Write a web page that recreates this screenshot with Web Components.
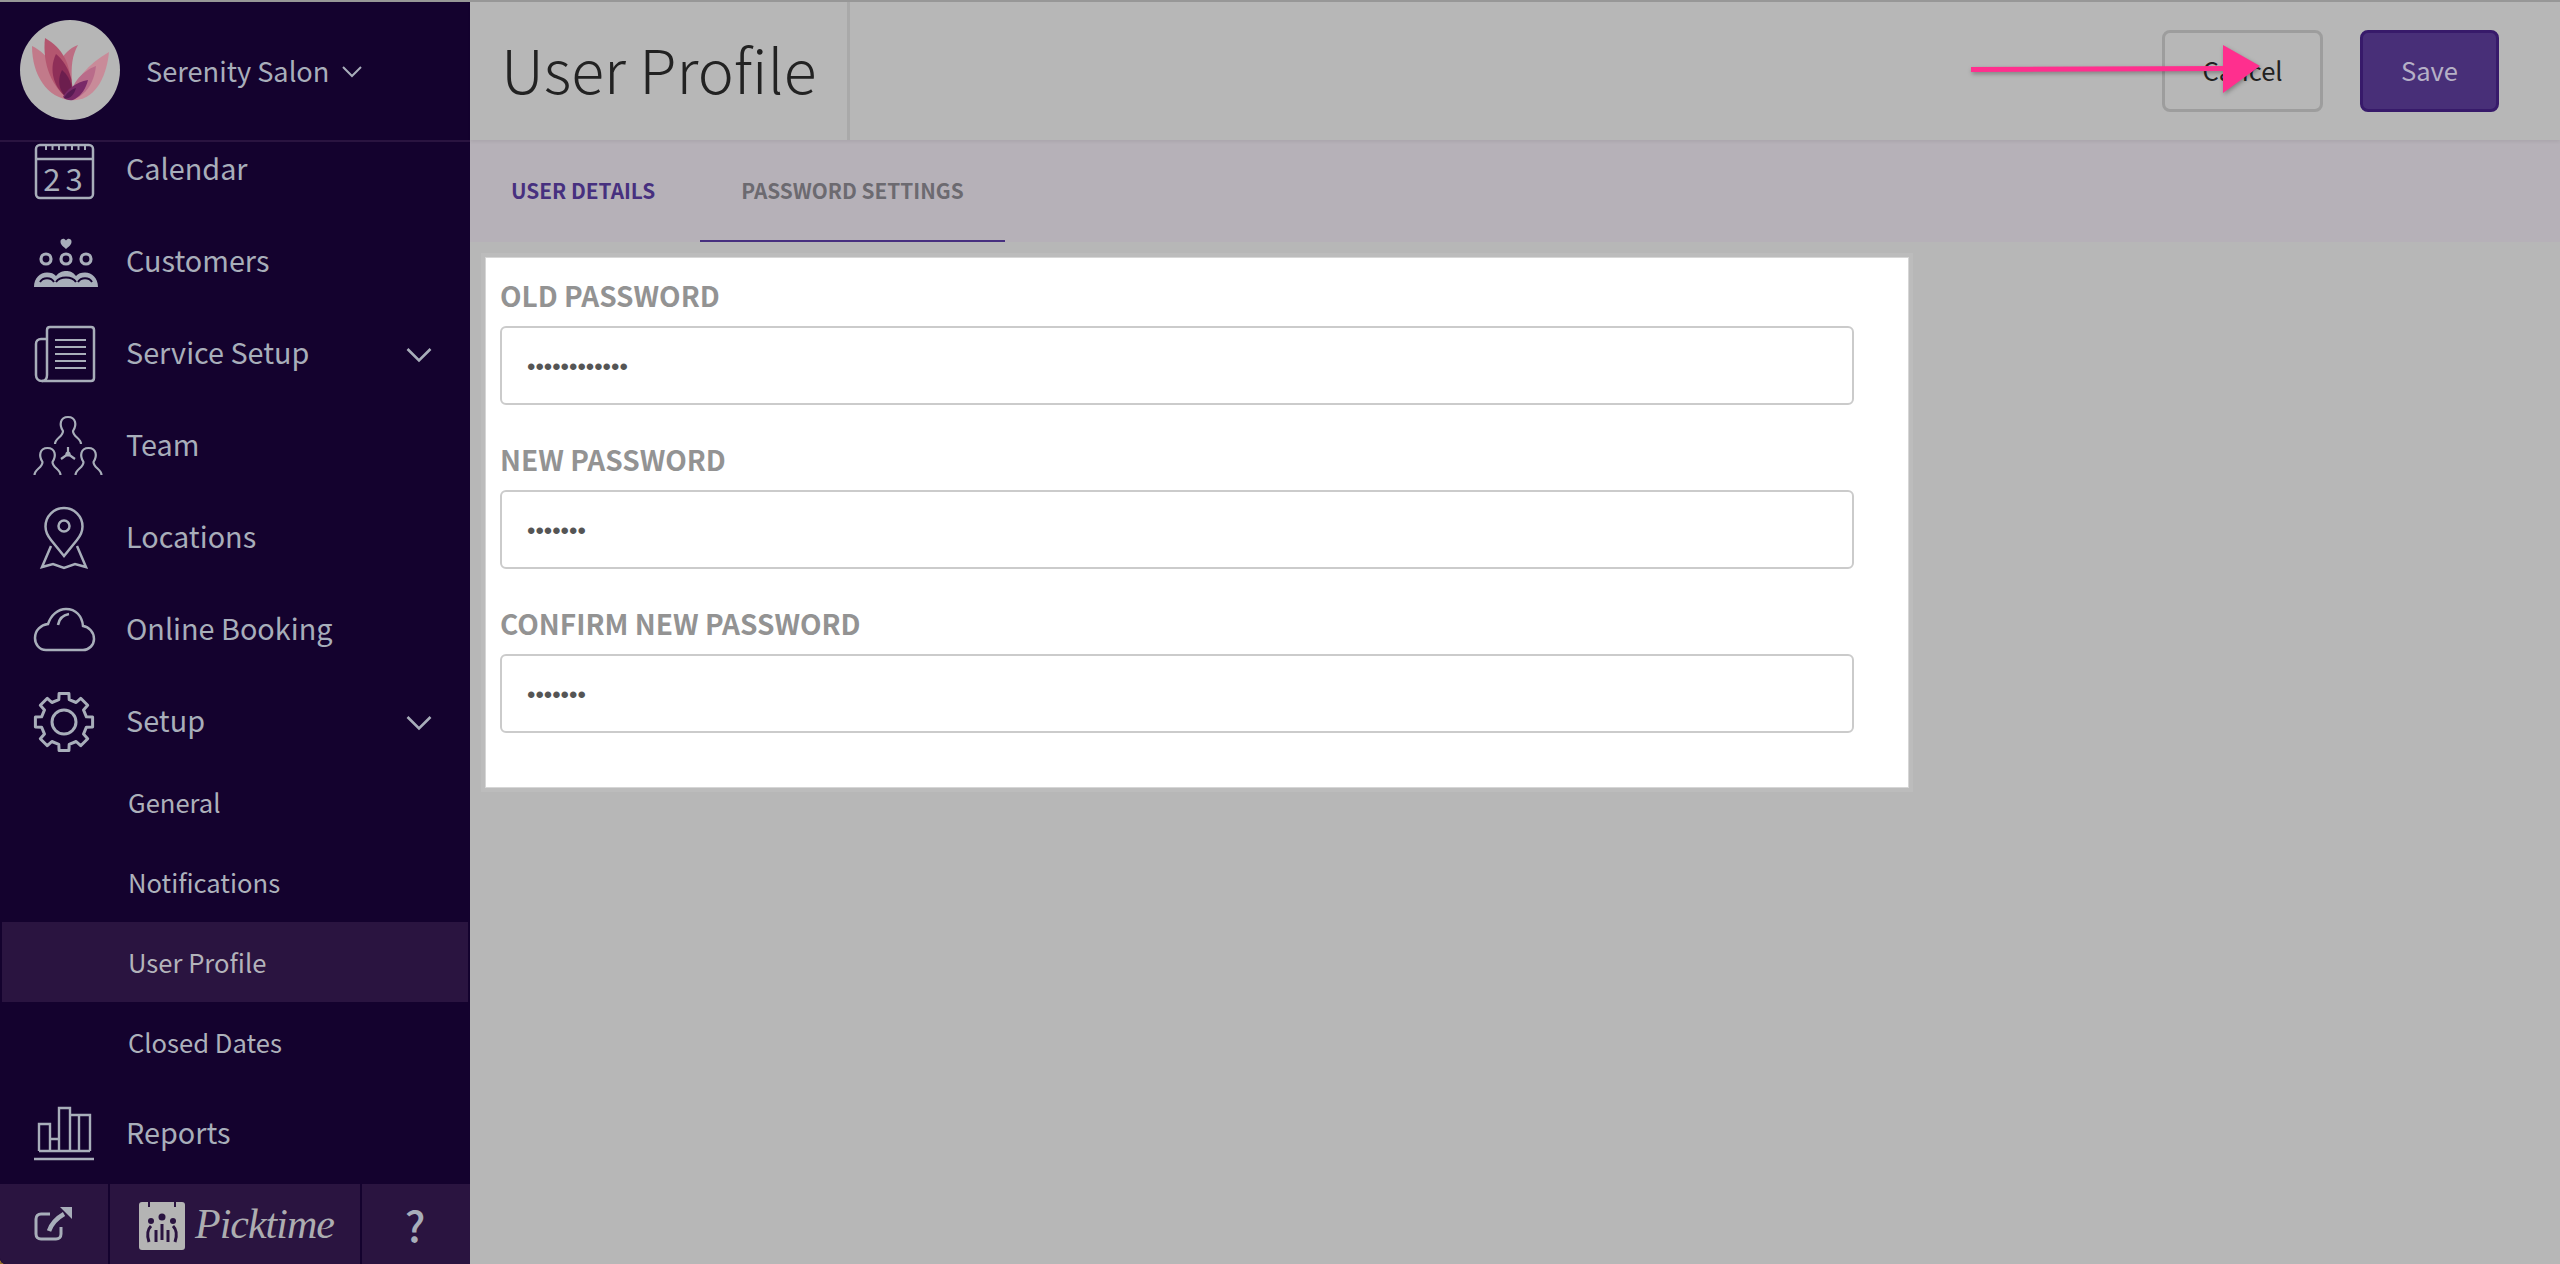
<!DOCTYPE html>
<html lang="en">
<head>
<meta charset="utf-8">
<title>User Profile</title>
<style>
  html, body { margin: 0; height: 100%; background: #b7b7b7; }
  body { font-family: "Noto Sans CJK SC", "Noto Sans", sans-serif; overflow: hidden; }
</style>
</head>
<body>
<app-shell>
  <side-bar slot="side" salon="Serenity Salon">
    <nav-item label="Calendar" icon="calendar" style="margin-top:-19px"></nav-item>
    <nav-item label="Customers" icon="customers"></nav-item>
    <nav-item label="Service Setup" icon="service" chevron></nav-item>
    <nav-item label="Team" icon="team"></nav-item>
    <nav-item label="Locations" icon="locations"></nav-item>
    <nav-item label="Online Booking" icon="cloud"></nav-item>
    <nav-item label="Setup" icon="gear" chevron></nav-item>
    <sub-item style="margin-top:-5px">General</sub-item>
    <sub-item>Notifications</sub-item>
    <sub-item active>User Profile</sub-item>
    <sub-item>Closed Dates</sub-item>
    <nav-item label="Reports" icon="reports" style="margin-top:5px"></nav-item>
  </side-bar>
  <page-header heading="User Profile"></page-header>
  <tab-bar>
    <tab-link accent>USER DETAILS</tab-link>
    <tab-link active>PASSWORD SETTINGS</tab-link>
  </tab-bar>
  <form-card>
    <password-field label="OLD PASSWORD" count="12"></password-field>
    <password-field label="NEW PASSWORD" count="7"></password-field>
    <password-field label="CONFIRM NEW PASSWORD" count="7"></password-field>
  </form-card>
</app-shell>

<script>
const INK = '#a8aeba';

function gearPath(cx, cy) {
  // eight rounded teeth, walked around the centre
  const pts = [];
  for (let i = 0; i < 8; i++) {
    const a = -Math.PI / 2 + i * Math.PI / 4;
    const s = 0.17, g = 0.23;
    pts.push([a - g, 23], [a - s, 29], [a + s, 29], [a + g, 23]);
  }
  return 'M' + pts.map(p => (cx + p[1] * Math.cos(p[0])).toFixed(1) + ' ' + (cy + p[1] * Math.sin(p[0])).toFixed(1)).join('L') + 'Z';
}

const PERSON = 'M-13 27C-13 21-5 20-5 14C-9 8-8 0 0 0C8 0 9 8 5 14C5 20 13 21 13 27';

const ICONS = {
  calendar: `<rect x="2" y="9" width="57" height="53" rx="4"/><path d="M2 23H59"/>
    <path d="M12 8v6M18.500 8v6M25 8v6M31.500 8v6M38 8v6M44.500 8v6M51 8v6" stroke-width="2"/>
    <text x="31.500" y="55" text-anchor="middle" font-size="31" letter-spacing="5" fill="${INK}" stroke="none" font-family="Noto Sans CJK SC, sans-serif">23</text>`,
  customers: `<path d="M32 21C27 17 26.500 15.500 26.500 13.500C26.500 11 30 9.500 32 12.500C34 9.500 37.500 11 37.500 13.500C37.500 15.500 37 17 32 21Z" fill="${INK}" stroke="none"/>
    <g stroke-width="3.200"><circle cx="12" cy="31" r="5"/><circle cx="32" cy="31" r="5"/><circle cx="52" cy="31" r="5"/></g>
    <path d="M0 59C0 50 6 44.500 13 44.500C17 44.500 20 45.500 22 48C25 44 29 43 32 43C36 43 39 44 42 48C44 45.500 47 44.500 51 44.500C58 44.500 64 50 64 59Z" fill="${INK}" stroke="none"/>
    <path d="M6 54C9 49 17 49 20 54M22 54C26 48 38 48 42 54M44 54C47 49 55 49 58 54" stroke="#14022e" stroke-width="2"/>`,
  service: `<path d="M13 55V10C13 8 14 7 16 7H57C59 7 60 8 60 10V58C60 60 59 61 57 61H8C4 61 2 58 2 55V24C2 21 4 19 7 19H13"/>
    <path d="M13 55C13 59 11 61 8 61" />
    <path d="M21 20H52M21 27H52M21 34H52M21 41H52M21 48H52" stroke-width="2"/>`,
  team: `<g stroke-width="2.200"><path d="${PERSON}" transform="translate(34 5)"/><path d="${PERSON}" transform="translate(13.500 36)"/><path d="${PERSON}" transform="translate(54.500 36)"/>
    <path d="M34 42V35M34 42L27 47M34 42L41 47"/><circle cx="34" cy="42" r="1.500" fill="${INK}"/></g>`,
  locations: `<path d="M30 52L17 36C13 31 11.500 27 11.500 22.500C11.500 12 20 4 30 4C40 4 48.500 12 48.500 22.500C48.500 27 47 31 43 36Z"/>
    <circle cx="30" cy="22" r="5.500"/>
    <path d="M17 42L8 63L19 60L30 64L41 60L52 63L43 42"/>`,
  cloud: `<path d="M12 54C5 54 1 48 1 42C1 34 7 29 14 28C17 19 24 13 32 13C42 13 48 20 49 30C55 31 60 36 60 43C60 49 55 54 49 54Z"/>
    <path d="M24 29C25 23 29 19 35 18"/>`,
  gear: `<g stroke-width="3"><path d="${gearPath(30, 34)}" stroke-linejoin="round"/><circle cx="30" cy="34" r="12"/></g>`,
  reports: `<path d="M5 51V24H16V51M16 51V39H25V51M25 51V8H36V51M36 51V15H56V51M45 15V51M5 51H56" stroke-width="2.400"/><path d="M0 59H60"/>`
};

class AppShell extends HTMLElement {
  constructor() {
    super();
    this.attachShadow({ mode: 'open' });
    this.shadowRoot.innerHTML = `
      <style>
        :host { display: grid; grid-template-columns: 470px 1fr; height: 1264px; position: relative; background: #96702c; }
        .side { grid-row: 1; min-height: 0; }
        .main { display: flex; flex-direction: column; background: #b7b7b7; min-width: 0; }
        svg.arrow { position: absolute; left: 1960px; top: 36px; filter: drop-shadow(1px 2px 2px rgba(0,0,0,.3)); }
        .edge { position: absolute; left: 0; right: 0; top: 0; height: 2px; background: #979797; }
      </style>
      <div class="side"><slot name="side"></slot></div>
      <div class="main"><slot></slot></div>
      <div class="edge"></div>
      <svg class="arrow" width="310" height="66" viewBox="0 0 310 66">
        <path d="M11 31L263 30V9L300 30L263 57V35L11 36Z" fill="#ff2f8e"/>
      </svg>`;
  }
}

class SideBar extends HTMLElement {
  constructor() {
    super();
    this.attachShadow({ mode: 'open' });
    this.shadowRoot.innerHTML = `
      <style>
        :host { display: flex; flex-direction: column; height: 1264px; background: #14022e; color: ${INK}; border-bottom-left-radius: 6px; overflow: hidden; }
        header { flex: none; height: 140px; border-bottom: 2px solid #2a1440; display: flex; align-items: center; padding-left: 20px; box-sizing: content-box; }
        .logo { width: 100px; height: 100px; flex: none; }
        .name { margin-left: 26px; font-size: 27.200px; line-height: 40px; }
        .caret { margin-left: 13px; margin-top: 4px; }
        nav { flex: 1; min-height: 0; overflow: hidden; display: flex; flex-direction: column; }
        footer { flex: none; height: 80px; display: grid; grid-template-columns: 108px 250px 1fr; column-gap: 2px; background: #14022e; }
        footer > div { background: #2a1440; display: flex; align-items: center; justify-content: center; }
        .brand { font: italic 42px/60px "Liberation Serif", serif; color: #adadb0; margin-left: 9px; letter-spacing: -1px; }
        .help { font-size: 42px; line-height: 50px; color: #a8aeba; padding-right: 2px; font-weight: 500; }
        .pick { justify-content: flex-start !important; padding-left: 28px; }
      </style>
      <header>
        <svg class="logo" viewBox="0 0 100 100">
          <circle cx="50" cy="50" r="50" fill="#b6b6b6"/>
          <path d="M12 26C28 34 42 52 50 80C28 78 12 56 12 26Z" fill="#c27a8a"/>
          <path d="M58 25C50 28 43 34 39 44L52 62C51 46 52 36 58 25Z" fill="#bd6d83"/>
          <path d="M25 18C42 28 54 44 50 80C32 68 22 44 25 18Z" fill="#b4566f"/>
          <path d="M89 32C86 62 72 82 50 80C54 60 68 44 89 32Z" fill="#c98b99"/>
          <path d="M76 46C74 64 64 78 50 80C50 66 60 52 76 46Z" fill="#b96c8a"/>
          <path d="M36 34C28 50 34 70 50 80C56 66 50 46 36 34Z" fill="#8f2f58"/>
          <path d="M42 50C36 62 40 74 50 80C54 72 52 58 42 50Z" fill="#6c1e4e"/>
          <path d="M68 60C56 62 46 70 43 77C47 81 52 81 55 79C62 75 66 68 68 60Z" fill="#7a2a68"/>
          <path d="M56 68C50 70 46 74 44 78C48 80 54 76 56 68Z" fill="#571a52"/>
        </svg>
        <span class="name">${this.getAttribute('salon')}</span>
        <svg class="caret" width="20" height="14" viewBox="0 0 20 14"><path d="M1 2L10 11L19 2" fill="none" stroke="${INK}" stroke-width="2"/></svg>
      </header>
      <nav><slot></slot></nav>
      <footer>
        <div>
          <svg width="40" height="36" viewBox="0 0 40 36" fill="none" stroke="${INK}" stroke-width="3">
            <path d="M27 21V28C27 31 25 33 22 33H7C4 33 2 31 2 28V13C2 10 4 8 7 8H16"/>
            <path d="M15 25C17 19 23 12 30 8" stroke-width="4.500"/>
            <path d="M26 1H38V13Z" fill="${INK}" stroke="none"/>
          </svg>
        </div>
        <div class="pick">
          <svg width="48" height="52" viewBox="0 0 48 52">
            <rect x="1" y="4" width="46" height="48" rx="3" fill="#b4b4b4"/>
            <path d="M11 0v9M37 0v9" stroke="#2a1440" stroke-width="2"/>
            <g fill="none" stroke="#2a1440" stroke-width="3">
              <path d="M24 26V42M13 28C9 32 9 38 11 44M35 28C39 32 39 38 37 44M18 32V44M30 32V44"/>
            </g>
            <g fill="#2a1440"><circle cx="24" cy="19" r="3.500"/><circle cx="13" cy="23" r="3"/><circle cx="35" cy="23" r="3"/></g>
          </svg>
          <span class="brand">Picktime</span>
        </div>
        <div><span class="help">?</span></div>
      </footer>`;
  }
}

class NavItem extends HTMLElement {
  constructor() {
    super();
    this.attachShadow({ mode: 'open' });
  }
  connectedCallback() {
    const chevron = this.hasAttribute('chevron')
      ? `<svg class="chev" width="26" height="16" viewBox="0 0 26 16"><path d="M1.500 2L13 13.500L24.500 2" fill="none" stroke="${INK}" stroke-width="2.600"/></svg>`
      : '';
    this.shadowRoot.innerHTML = `
      <style>
        :host { display: flex; flex: none; height: 92px; align-items: center; padding-left: 34px; font-size: 28.800px; color: ${INK}; }
        svg.icon { width: 68px; height: 68px; flex: none; overflow: visible; fill: none; stroke: ${INK}; stroke-width: 2.500; margin-top: 1px; }
        span { margin-left: 24px; flex: 1; line-height: 40px; margin-top: -2px; }
        .chev { margin-right: 38px; flex: none; margin-top: 4px; }
      </style>
      <svg class="icon" viewBox="0 0 68 68">${ICONS[this.getAttribute('icon')]}</svg>
      <span>${this.getAttribute('label')}</span>
      ${chevron}`;
  }
}

class SubItem extends HTMLElement {
  constructor() {
    super();
    this.attachShadow({ mode: 'open' });
    this.shadowRoot.innerHTML = `
      <style>
        :host { display: flex; flex: none; height: 80px; align-items: center; margin: 0 2px; padding: 0 0 2px 126px; box-sizing: border-box; font-size: 25.600px; color: #adb1bb; }
        :host([active]) { background: #2a1440; color: #b3b3ba; }
      </style>
      <slot></slot>`;
  }
}

class PageHeader extends HTMLElement {
  constructor() {
    super();
    this.attachShadow({ mode: 'open' });
    this.shadowRoot.innerHTML = `
      <style>
        :host { display: flex; flex: none; height: 140px; align-items: stretch; background: #b7b7b7; box-shadow: 0 2px 3px rgba(0,0,0,.06); position: relative; }
        h1 { margin: 0; width: 380px; box-sizing: border-box; padding: 0 0 4px 31px; display: flex; align-items: center; font-size: 60.800px; font-weight: 300; line-height: 80px; color: #222; border-right: 3px solid #a9a9a9; white-space: nowrap; }
        .actions { margin-left: auto; display: flex; gap: 37px; align-items: center; padding-right: 61px; }
        button { height: 82px; box-sizing: border-box; font: inherit; font-size: 25.600px; border-radius: 8px; padding: 0 0 4px; margin-top: 2px; }
        .cancel { width: 161px; background: transparent; border: 3px solid #9d9d9d; color: #222; }
        .save { width: 139px; background: #482f78; border: 3px solid #371a6a; color: #b5b0c6; }
      </style>
      <h1>${this.getAttribute('heading')}</h1>
      <div class="actions">
        <button class="cancel">Cancel</button>
        <button class="save">Save</button>
      </div>`;
  }
}

class TabBar extends HTMLElement {
  constructor() {
    super();
    this.attachShadow({ mode: 'open' });
    this.shadowRoot.innerHTML = `
      <style>
        :host { display: flex; flex: none; height: 102px; gap: 4px; background: #b6b1b8; }
      </style>
      <slot></slot>`;
  }
}

class TabLink extends HTMLElement {
  constructor() {
    super();
    this.attachShadow({ mode: 'open' });
    this.shadowRoot.innerHTML = `
      <style>
        :host { display: flex; align-items: center; padding: 0 41px 2px; font-size: 20.800px; font-weight: 700; color: #6c6a70; box-sizing: border-box; }
        :host([accent]) { color: #47307f; }
        :host([active]) { border-bottom: 2px solid #47307f; padding-bottom: 0; }
      </style>
      <slot></slot>`;
  }
}

class FormCard extends HTMLElement {
  constructor() {
    super();
    this.attachShadow({ mode: 'open' });
    this.shadowRoot.innerHTML = `
      <style>
        :host { display: flex; flex-direction: column; width: 1422px; height: 529px; box-sizing: border-box; margin: 16px 0 0 16px; background: #fff; padding: 15px 14px; gap: 32px; box-shadow: 0 0 0 1px #d6d6d6, 0 0 0 5px #bcbcbc; }
      </style>
      <slot></slot>`;
  }
}

class PasswordField extends HTMLElement {
  constructor() {
    super();
    this.attachShadow({ mode: 'open' });
  }
  connectedCallback() {
    const dots = '\u2022'.repeat(Number(this.getAttribute('count')));
    this.shadowRoot.innerHTML = `
      <style>
        :host { display: block; width: 1354px; }
        label { display: block; font-size: 28px; line-height: 44px; font-weight: 700; color: #939393; margin-bottom: 9px; }
        .box { height: 79px; box-sizing: border-box; border: 2px solid #cbcbcb; border-radius: 6px; display: flex; align-items: center; padding: 3px 0 0 25px; font: 24px/30px "Liberation Sans", sans-serif; color: #555; background: #fff; }
      </style>
      <label>${this.getAttribute('label')}</label>
      <div class="box">${dots}</div>`;
  }
}

customElements.define('app-shell', AppShell);
customElements.define('side-bar', SideBar);
customElements.define('nav-item', NavItem);
customElements.define('sub-item', SubItem);
customElements.define('page-header', PageHeader);
customElements.define('tab-bar', TabBar);
customElements.define('tab-link', TabLink);
customElements.define('form-card', FormCard);
customElements.define('password-field', PasswordField);
</script>
</body>
</html>
